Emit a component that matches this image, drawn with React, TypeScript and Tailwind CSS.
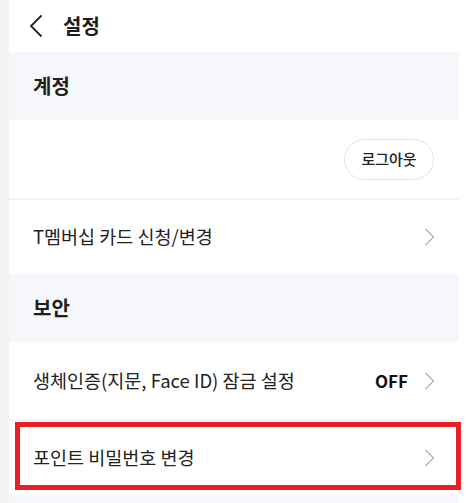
const font = { fontFamily: '"Noto Sans CJK KR", "Noto Sans", sans-serif' };

function Chevron() {
  return (
    <svg width="11" height="20" viewBox="0 0 11 20" fill="none" className="shrink-0">
      <path d="M1.5 2 L9.5 10 L1.5 18" stroke="#b5b5b5" strokeWidth="1.4" />
    </svg>
  );
}

function SectionHeader({ title }: { title: string }) {
  return (
    <div className="h-[68px] shrink-0 bg-[#f6f7fa] flex items-center pl-[24px]">
      <span className="text-[20px] font-bold text-[#1e1e1e]">{title}</span>
    </div>
  );
}

function Divider() {
  return <div className="h-[2px] shrink-0 bg-[#f3f3f3]" />;
}

export default function App() {
  return (
    <div className="flex w-[470px] h-[503px] overflow-hidden bg-white" style={font}>
      <div className="w-[9px] shrink-0 bg-[#f3f3f3]" />
      <div className="w-[450px] shrink-0 flex flex-col">
        <div className="h-[52px] shrink-0 flex items-center pl-[20px] gap-[20px]">
          <svg width="14" height="24" viewBox="0 0 14 24" fill="none">
            <path d="M12.5 1.5 L2 12 L12.5 22.5" stroke="#222" strokeWidth="1.8" />
          </svg>
          <span className="text-[20px] font-bold text-[#1e1e1e]">설정</span>
        </div>

        <SectionHeader title="계정" />

        <div className="h-[78px] shrink-0 flex items-center justify-end pr-[25px]">
          <button className="w-[90px] h-[41px] rounded-full border border-[#e4e4e4] text-[15px] font-medium text-[#222]">
            로그아웃
          </button>
        </div>
        <Divider />

        <div className="h-[74px] shrink-0 flex items-center justify-between pl-[24px] pr-[24px]">
          <span className="text-[18.5px] text-[#222]">T멤버십 카드 신청/변경</span>
          <Chevron />
        </div>

        <SectionHeader title="보안" />

        <div className="h-[77px] shrink-0 flex items-center justify-between pl-[24px] pr-[24px]">
          <span className="text-[18.5px] text-[#222]">생체인증(지문, Face ID) 잠금 설정</span>
          <div className="flex items-center gap-[16px]">
            <span className="text-[17px] font-bold text-[#111]">OFF</span>
            <Chevron />
          </div>
        </div>
        <Divider />

        <div className="relative h-[74px] shrink-0 flex items-center justify-between pl-[24px] pr-[24px]">
          <span className="text-[18.5px] text-[#222]">포인트 비밀번호 변경</span>
          <Chevron />
          <div className="absolute left-[6px] top-[1px] w-[446px] h-[68px] border-[5px] border-[#e81e28]" />
        </div>

        <SectionHeader title="" />
      </div>
    </div>
  );
}
